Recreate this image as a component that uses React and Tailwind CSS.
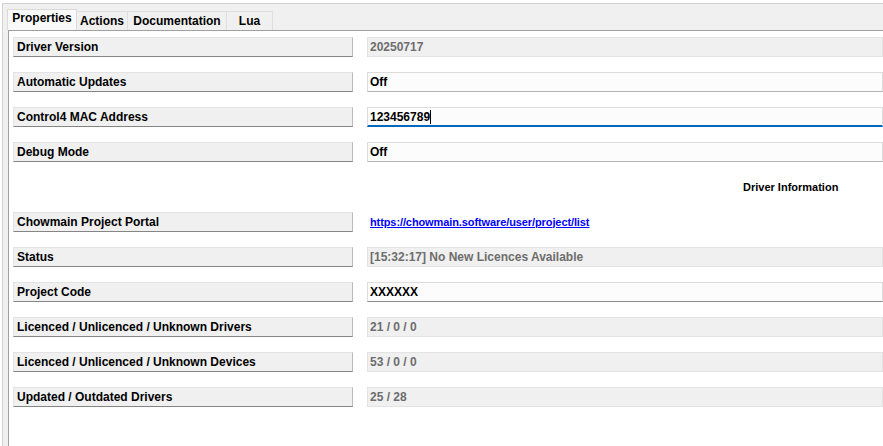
const FONT = { fontFamily: '"Liberation Sans", Arial, sans-serif' };

const TABS = [
  { label: 'Properties', w: 'w-[70px]', active: true },
  { label: 'Actions', w: 'w-[51px]' },
  { label: 'Documentation', w: 'w-[99px]' },
  { label: 'Lua', w: 'w-[46px]' },
];

// kind: ro = read-only grey box, edit = white box, focus = edit with blue underline, link = plain hyperlink
const ROWS = [
  { label: 'Driver Version', value: '20250717', kind: 'ro' },
  { label: 'Automatic Updates', value: 'Off', kind: 'edit' },
  { label: 'Control4 MAC Address', value: '123456789', kind: 'focus' },
  { label: 'Debug Mode', value: 'Off', kind: 'edit' },
  { header: 'Driver Information' },
  { label: 'Chowmain Project Portal', value: 'https://chowmain.software/user/project/list', kind: 'link' },
  { label: 'Status', value: '[15:32:17] No New Licences Available', kind: 'ro' },
  { label: 'Project Code', value: 'XXXXXX', kind: 'code' },
  { label: 'Licenced / Unlicenced / Unknown Drivers', value: '21 / 0 / 0', kind: 'ro' },
  { label: 'Licenced / Unlicenced / Unknown Devices', value: '53 / 0 / 0', kind: 'ro' },
  { label: 'Updated / Outdated Drivers', value: '25 / 28', kind: 'ro' },
];

const Value = ({ kind, value }) => {
  if (kind === 'link') {
    return (
      <div className="w-[600px] h-[20px] flex items-center pl-[3px]">
        <span className="text-[11px] font-bold text-[#0000ff] underline leading-none tracking-[-0.1px]">{value}</span>
      </div>
    );
  }
  if (kind === 'ro') {
    return (
      <div className="w-[600px] h-[20px] flex items-center pl-[2px] bg-[#f0f0f0] border border-[#e3e3e3]">
        <span className="text-[12px] font-bold text-[#6d6d6d] leading-none">{value}</span>
      </div>
    );
  }
  const bottom =
    kind === 'focus'
      ? 'border-b-2 border-b-[#0067c0]'
      : kind === 'code'
      ? 'border-b border-b-[#8a8a8a]'
      : 'border-b border-b-[#b4b4b4]';
  return (
    <div className={`w-[600px] h-[20px] flex items-center pl-[2px] bg-[#fcfcfc] border-t border-l border-r border-[#dcdcdc] ${bottom}`}>
      <span className="text-[12px] font-bold text-black leading-none">{value}</span>
      {kind === 'focus' && <span className="w-px h-[14px] bg-black" />}
    </div>
  );
};

const App = () => {
  return (
    <div className="w-[883px] h-[446px] bg-white overflow-hidden" style={FONT}>
      <div className="ml-[2px] mt-[3px] h-[443px] border-l border-t border-[#d2d2d2] bg-[#f0f0f0] flex flex-col">
        {/* Tabs */}
        <div className="h-[26px] pl-[4px] flex items-end">
          {TABS.map((t) =>
            t.active ? (
              <div
                key={t.label}
                className={`${t.w} h-[21px] bg-[#f9f9f9] border-t border-l border-r border-[#d9d9d9] flex items-start justify-center pt-[1px] text-[12px] leading-[14px] font-bold text-black`}
              >
                {t.label}
              </div>
            ) : (
              <div
                key={t.label}
                className={`${t.w} h-[19px] bg-[#f0f0f0] border-t border-r border-[#dedede] flex items-start justify-center pt-[2px] text-[12px] leading-[14px] font-bold text-black`}
              >
                {t.label}
              </div>
            )
          )}
        </div>

        {/* Panel */}
        <div className="ml-[5px] flex-1 bg-white border-t border-l border-[#a0a0a0] pl-[4px] pt-[6px] flex flex-col gap-[15px]">
          {ROWS.map((r, i) =>
            r.header ? (
              <div key={i} className="h-[20px] flex items-center pl-[730px]">
                <span className="text-[11px] font-bold text-black">{r.header}</span>
              </div>
            ) : (
              <div key={i} className="h-[20px] flex items-center gap-[14px]">
                <div className="w-[340px] h-[20px] shrink-0 bg-[#f0f0f0] border-t border-l border-[#e3e3e3] border-r border-r-[#b9b9b9] border-b border-b-[#858585] flex items-center pl-[3px]">
                  <span className="text-[12px] font-bold text-black leading-none">{r.label}</span>
                </div>
                <Value kind={r.kind} value={r.value} />
              </div>
            )
          )}
        </div>
      </div>
    </div>
  );
};

export default App;
